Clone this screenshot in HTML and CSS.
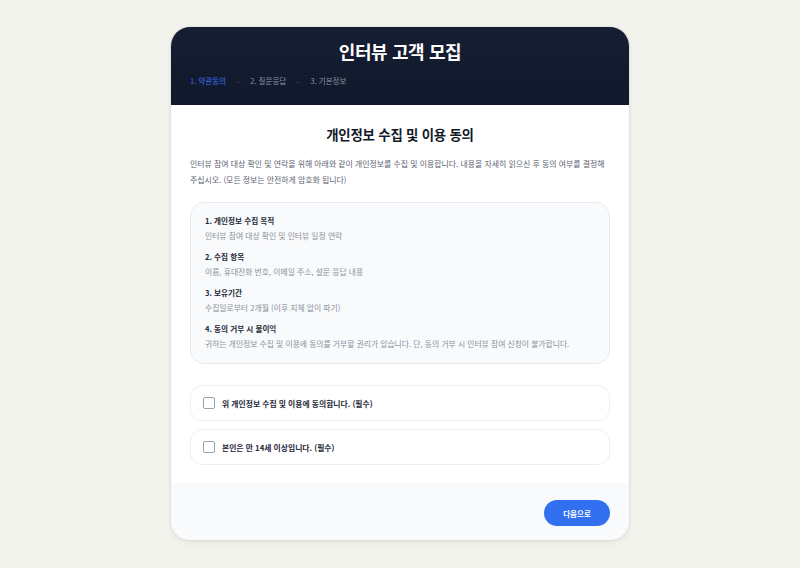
FILE: index.html
```html
<!DOCTYPE html>
<html lang="ko">
<head>
<meta charset="utf-8">
<title>인터뷰 고객 모집</title>
<link rel="stylesheet" href="styles.css">
</head>
<body>
<div class="card">
  <header class="head">
    <h1 class="head-title">인터뷰 고객 모집</h1>
    <nav class="steps">
      <span class="step active">1. 약관동의</span>
      <span class="sep">—</span>
      <span class="step">2. 질문응답</span>
      <span class="sep">—</span>
      <span class="step">3. 기본정보</span>
    </nav>
  </header>
  <main class="body">
    <h2 class="title">개인정보 수집 및 이용 동의</h2>
    <p class="intro">인터뷰 참여 대상 확인 및 연락을 위해 아래와 같이 개인정보를 수집 및 이용합니다. 내용을 자세히 읽으신 후 동의 여부를 결정해 주십시오. (모든 정보는 안전하게 암호화 됩니다)</p>
    <div class="info">
      <div class="item">
        <div class="item-h">1. 개인정보 수집 목적</div>
        <div class="item-d">인터뷰 참여 대상 확인 및 인터뷰 일정 연락</div>
      </div>
      <div class="item">
        <div class="item-h">2. 수집 항목</div>
        <div class="item-d">이름, 휴대전화 번호, 이메일 주소, 설문 응답 내용</div>
      </div>
      <div class="item">
        <div class="item-h">3. 보유기간</div>
        <div class="item-d">수집일로부터 2개월 (이후 지체 없이 파기)</div>
      </div>
      <div class="item">
        <div class="item-h">4. 동의 거부 시 불이익</div>
        <div class="item-d">귀하는 개인정보 수집 및 이용에 동의를 거부할 권리가 있습니다. 단, 동의 거부 시 인터뷰 참여 신청이 불가합니다.</div>
      </div>
    </div>
    <label class="check">
      <span class="box"></span>
      <span class="check-label">위 개인정보 수집 및 이용에 동의합니다. (필수)</span>
    </label>
    <label class="check">
      <span class="box"></span>
      <span class="check-label">본인은 만 14세 이상입니다. (필수)</span>
    </label>
  </main>
  <footer class="foot">
    <button class="next">다음으로</button>
  </footer>
</div>
</body>
</html>
```
FILE: styles.css
```css
* { box-sizing: border-box; }
html, body { margin: 0; padding: 0; }
body {
  background: #f3f3ed;
  font-family: "Noto Sans CJK KR", "Noto Sans", sans-serif;
  padding-top: 27px;
  height: 568px;
  overflow: hidden;
  word-break: keep-all;
}
.card {
  width: 458px;
  margin: 0 auto;
  background: #ffffff;
  border-radius: 19px;
  overflow: hidden;
  box-shadow: 0 2px 6px rgba(0,0,0,0.08), 0 0 0 1px rgba(0,0,0,0.03);
}
.head {
  background: linear-gradient(180deg, #161e33 0%, #10182b 100%);
  padding: 10px 19px 16px;
  height: 78px;
}
.head-title {
  margin: 0;
  text-align: center;
  color: #ffffff;
  font-size: 18px;
  line-height: 28px;
  font-weight: 700;
  letter-spacing: -0.4px;
}
.steps {
  display: flex;
  align-items: center;
  gap: 9px;
  margin-top: 10px;
  font-size: 7.5px;
  line-height: 12px;
  color: #8a93a6;
}
.step.active { color: #3b6ff2; }
.sep { color: #3a4257; font-size: 7px; }
.body {
  padding: 19px 19px 18px;
}
.title {
  margin: 0;
  text-align: center;
  font-size: 13.4px;
  line-height: 20px;
  font-weight: 700;
  color: #111827;
  letter-spacing: -0.2px;
}
.intro {
  margin: 12px 0 14px;
  font-size: 7.9px;
  line-height: 16px;
  color: #5b6270;
}
.info {
  background: #f8fafc;
  border: 1px solid #e6eaef;
  border-radius: 14px;
  padding: 11px 14px 12px;
  display: flex;
  flex-direction: column;
  gap: 7px;
}
.item-h {
  font-size: 7.6px;
  line-height: 14px;
  font-weight: 700;
  color: #1f2937;
  margin-bottom: 1px;
}
.item-d {
  font-size: 7.8px;
  line-height: 14px;
  color: #8a909b;
}
.check {
  display: flex;
  align-items: center;
  gap: 7px;
  height: 36px;
  padding: 0 12px;
  border: 1px solid #eceef2;
  border-radius: 12px;
  background: #fff;
  margin-top: 8px;
}
.info + .check { margin-top: 21px; }
.box {
  width: 12px;
  height: 12px;
  border: 1px solid #9aa0aa;
  border-radius: 2px;
  background: #fff;
  flex: none;
}
.check-label {
  font-size: 7.8px;
  font-weight: 700;
  color: #1f2937;
}
.foot {
  background: #f8fafc;
  padding: 17px 19px 14px;
  display: flex;
  justify-content: flex-end;
}
.next {
  width: 66px;
  height: 26px;
  border: none;
  border-radius: 13px;
  background: #3370f0;
  color: #fff;
  font-family: inherit;
  font-size: 7.5px;
  font-weight: 700;
  padding: 0;
}
```
